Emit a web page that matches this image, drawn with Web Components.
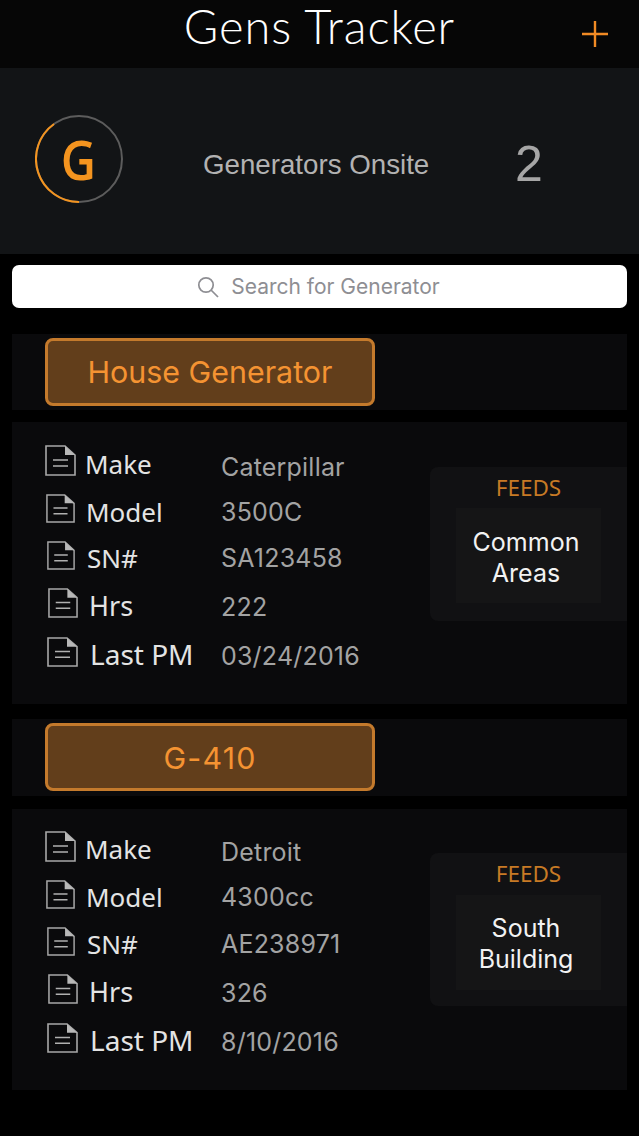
<!DOCTYPE html>
<html>
<head>
<meta charset="utf-8">
<title>Gens Tracker</title>
<style>
  html, body { margin: 0; padding: 0; background: #000; }
  body { width: 639px; height: 1136px; overflow: hidden; font-family: "Inter", "Liberation Sans", sans-serif; }
</style>
</head>
<body>
<gens-header title="Gens Tracker"></gens-header>
<gens-summary label="Generators Onsite" count="2"></gens-summary>
<gens-search placeholder="Search for Generator"></gens-search>

<generator-card name="House Generator" bar="76" gap="12" panel="282" top="26" pad="19">
  <spec-row label="Make" value="Caterpillar" ix="45" iw="31" ih="31" idy="-5" lx="10" ldy="-1" vdy="2"></spec-row>
  <spec-row label="Model" value="3500C" ix="46" iw="29" ih="29" idy="-5" lx="12" ldy="-1" vdy="-1"></spec-row>
  <spec-row label="SN#" value="SA123458" ix="47" iw="28" ih="29" idy="-6" lx="13" ldy="-3" vdy="-3"></spec-row>
  <spec-row label="Hrs" value="222" ix="48" iw="30" ih="30" idy="-6" lx="12" ldy="-3" vdy="-2" fs="27"></spec-row>
  <spec-row label="Last PM" value="03/24/2016" ix="47" iw="31" ih="30" idy="-5" lx="13" ldy="-3" vdy="-1" fs="28"></spec-row>
  <feeds-box slot="feeds" top="45" height="154" inner-top="41" inner-height="95" text-dy="5">Common<br>Areas</feeds-box>
</generator-card>

<generator-card name="G-410" spacing="1.2" text-pad="2" bar="77" gap="13" panel="281" top="15" pad="17">
  <spec-row label="Make" value="Detroit" ix="45" iw="31" ih="31" idy="-4" lx="10" ldy="-1" vdy="2"></spec-row>
  <spec-row label="Model" value="4300cc" ix="46" iw="29" ih="29" idy="-4" lx="12" ldy="-1" vdy="-1"></spec-row>
  <spec-row label="SN#" value="AE238971" ix="47" iw="28" ih="29" idy="-5" lx="13" ldy="-2" vdy="-2"></spec-row>
  <spec-row label="Hrs" value="326" ix="48" iw="30" ih="30" idy="-5" lx="12" ldy="-2" vdy="-1" fs="27"></spec-row>
  <spec-row label="Last PM" value="8/10/2016" ix="47" iw="31" ih="30" idy="-4" lx="13" ldy="-2" vdy="0" fs="28"></spec-row>
  <feeds-box slot="feeds" top="44" height="153" inner-top="42" inner-height="95" text-dy="3">South<br>Building</feeds-box>
</generator-card>

<script>
class GensHeader extends HTMLElement {
    connectedCallback() {
        const root = this.shadowRoot || this.attachShadow({ mode: 'open' })
        root.innerHTML = `
      <style>
        :host { display: flex; height: 68px; background: #060606; color: #fff; }
        .wrap { flex: 1; display: flex; align-items: center; padding: 0 30px 0 0; }
        h1 { flex: 1; align-self: flex-start; margin: 1px 0 0 30px; text-align: center; font: 300 47px/50px "Lato", "Open Sans", sans-serif; letter-spacing: 0.9px; }
        svg { display: block; width: 28px; height: 28px; margin: 0 0 0 -28px; }
      </style>
      <div class="wrap">
        <h1>${this.getAttribute('title')}</h1>
        <svg viewBox="0 0 28 28" fill="none" stroke="#f08a24" stroke-width="2.4"><path d="M14 1V27M1 14H27"/></svg>
      </div>
    `
    }
}
customElements.define('gens-header', GensHeader)

class GensSummary extends HTMLElement {
    connectedCallback() {
        const root = this.shadowRoot || this.attachShadow({ mode: 'open' })
        root.innerHTML = `
      <style>
        :host { display: flex; height: 186px; background: #121416; align-items: center; padding-left: 35px; box-sizing: border-box; }
        .ring { position: relative; width: 88px; height: 88px; flex: none; margin-top: -5px; }
        .ring svg { position: absolute; inset: 0; }
        .ring span { display: flex; height: 100%; align-items: center; justify-content: center; font: 600 54px/1 "Open Sans", sans-serif; color: #f4941f; transform: scaleX(0.9); margin-left: -1px; }
        .label { margin-left: 80px; width: 313px; font: 400 27.7px/32px "Liberation Sans", sans-serif; color: #b2b2b2; margin-top: 7px; }
        .count { font: 400 50px/56px "Liberation Sans", sans-serif; color: #a6a6a6; margin-top: 6px; margin-left: -1px; }
      </style>
      <div class="ring">
        <svg viewBox="0 0 88 88" fill="none" stroke-width="2">
          <circle cx="44" cy="44" r="43" stroke="#5c5c5c"/>
          <path d="M44 87A43 43 0 0 1 19 9" stroke="#f4941f"/>
        </svg>
        <span>G</span>
      </div>
      <div class="label">${this.getAttribute('label')}</div>
      <div class="count">${this.getAttribute('count')}</div>
    `
    }
}
customElements.define('gens-summary', GensSummary)

class GensSearch extends HTMLElement {
    connectedCallback() {
        const root = this.shadowRoot || this.attachShadow({ mode: 'open' })
        root.innerHTML = `
      <style>
        :host { display: flex; margin: 11px 12px 0; height: 43px; padding-right: 2px; box-sizing: border-box; background: #fff; border-radius: 7px; align-items: center; justify-content: center; gap: 12px; color: #8e8e93; font: 400 21px/28px "Inter", sans-serif; }
        svg { width: 22px; height: 22px; flex: none; }
      </style>
      <svg viewBox="0 0 22 22" fill="none" stroke="#8e8e93" stroke-width="1.7"><circle cx="9" cy="9" r="7.2"/><path d="M14 14L21 21"/></svg>
      <span>${this.getAttribute('placeholder')}</span>
    `
    }
}
customElements.define('gens-search', GensSearch)

class GeneratorCard extends HTMLElement {
    connectedCallback() {
        const root = this.shadowRoot || this.attachShadow({ mode: 'open' })
        const bar = this.getAttribute('bar')
        const gap = this.getAttribute('gap')
        const panel = this.getAttribute('panel')
        root.innerHTML = `
      <style>
        :host { display: block; margin: ${this.getAttribute('top')}px 12px 0; }
        .bar { height: ${bar}px; background: #0a0a0c; padding: 4px 0 0 33px; box-sizing: border-box; }
        button {
          display: block; width: 330px; height: 68px; padding: ${this.getAttribute('text-pad') || 0}px 0 0; box-sizing: border-box;
          background: #623e1b; border: 3px solid #c47a2c; border-radius: 8px;
          color: #f49332; font: 400 30.4px/1 "Inter", sans-serif; letter-spacing: ${this.getAttribute('spacing') || 0}px;
        }
        .panel { position: relative; margin-top: ${gap}px; height: ${panel}px; background: #0a0a0c; padding-top: ${this.getAttribute('pad')}px; box-sizing: border-box; }
      </style>
      <div class="bar"><button>${this.getAttribute('name')}</button></div>
      <div class="panel">
        <slot></slot>
        <slot name="feeds"></slot>
      </div>
    `
    }
}
customElements.define('generator-card', GeneratorCard)

class SpecRow extends HTMLElement {
    connectedCallback() {
        const root = this.shadowRoot || this.attachShadow({ mode: 'open' })
        const a = (n) => this.getAttribute(n)
        const ix = a('ix') - 12
        const labelLeft = ix + Number(a('iw')) + Number(a('lx'))
        root.innerHTML = `
      <style>
        :host { display: flex; height: 48px; align-items: center; }
        svg { flex: none; width: ${a('iw')}px; height: ${a('ih')}px; margin: ${a('idy') * 2}px 0 0 ${ix}px; }
        .label { flex: none; width: ${209 - labelLeft + 1}px; margin: ${a('ldy') * 2}px 0 0 ${Number(a('lx')) - 1}px; color: #e4e4e4; font: 400 ${a('fs') || 26}px/32px "Noto Sans", sans-serif; white-space: nowrap; }
        .value { margin-top: ${a('vdy') * 2}px; color: #a3a3a3; font: 400 25px/32px "Inter", sans-serif; letter-spacing: 0.2px; white-space: nowrap; }
      </style>
      <svg viewBox="0 0 31 31" fill="none" preserveAspectRatio="none">
        <path d="M1 1H20L30 10V30H1Z" stroke="#a8a8a8" stroke-width="1.6"/>
        <path d="M20 1L30 10H20Z" fill="#b8b8b8"/>
        <path d="M8 15H23M8 21H23" stroke="#b0b0b0" stroke-width="1.6"/>
      </svg>
      <div class="label">${a('label')}</div>
      <div class="value">${a('value')}</div>
    `
    }
}
customElements.define('spec-row', SpecRow)

class FeedsBox extends HTMLElement {
    connectedCallback() {
        const root = this.shadowRoot || this.attachShadow({ mode: 'open' })
        const a = (n) => this.getAttribute(n)
        root.innerHTML = `
      <style>
        :host { position: absolute; right: 0; top: ${a('top')}px; width: 197px; height: ${a('height')}px; background: #111113; border-radius: 8px 0 0 8px; box-sizing: border-box; }
        .title { position: absolute; left: 0; right: 0; top: 8px; text-align: center; color: #c77a25; font: 400 22.5px/26px "Noto Sans", sans-serif; }
        .inner { position: absolute; left: 26px; width: 145px; top: ${a('inner-top')}px; height: ${a('inner-height')}px; background: #151516; display: flex; align-items: center; justify-content: center; text-align: center; color: #f2f2f2; font: 400 25px/31px "Inter", sans-serif; }
        .inner div { margin: ${a('text-dy')}px 5px 0 0; }
      </style>
      <div class="title">FEEDS</div>
      <div class="inner"><div><slot></slot></div></div>
    `
    }
}
customElements.define('feeds-box', FeedsBox)
</script>
</body>
</html>
